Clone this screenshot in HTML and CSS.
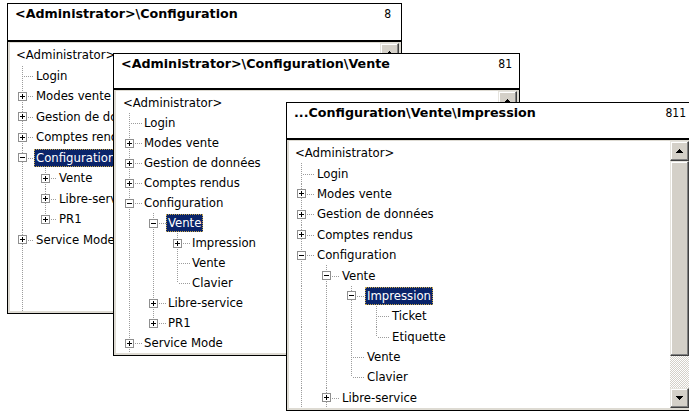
FILE: index.html
```html
<!DOCTYPE html>
<html lang="fr">
<head>
<meta charset="utf-8">
<title>Configuration</title>
<link rel="stylesheet" href="styles.css">
</head>
<body>
<div class="desk">

  <div class="win w1">
    <div class="title"><span class="path">&lt;Administrator&gt;\Configuration</span><span class="num">8</span></div>
    <div class="tree">
      <div class="nodes">
        <div class="row"><span class="lbl root">&lt;Administrator&gt;</span></div>
        <div class="row"><i class="c t"></i><span class="lbl">Login</span></div>
        <div class="row"><i class="c t"><b class="x p"></b></i><span class="lbl">Modes vente</span></div>
        <div class="row"><i class="c t"><b class="x p"></b></i><span class="lbl">Gestion de données</span></div>
        <div class="row"><i class="c t"><b class="x p"></b></i><span class="lbl">Comptes rendus</span></div>
        <div class="row"><i class="c t"><b class="x"></b></i><span class="lbl sel">Configuration</span></div>
        <div class="row"><i class="c v"></i><i class="c t"><b class="x p"></b></i><span class="lbl">Vente</span></div>
        <div class="row"><i class="c v"></i><i class="c t"><b class="x p"></b></i><span class="lbl">Libre-service</span></div>
        <div class="row"><i class="c v"></i><i class="c l"><b class="x p"></b></i><span class="lbl">PR1</span></div>
        <div class="row"><i class="c t"><b class="x p"></b></i><span class="lbl">Service Mode</span></div>
        <div class="tail"><i class="c v"></i></div>
      </div>
      <div class="vs">
        <div class="sb"><svg width="7" height="4" viewBox="0 0 7 4"><path d="M3 0h1v1h1v1h1v1h1v1H0V3h1V2h1V1h1z"/></svg></div>
        <div class="thumb"></div>
        <div class="trk"></div>
        <div class="sb"><svg width="7" height="4" viewBox="0 0 7 4"><path d="M0 0h7v1H6v1H5v1H4v1H3V3H2V2H1V1H0z"/></svg></div>
      </div>
    </div>
  </div>

  <div class="win w2">
    <div class="title"><span class="path">&lt;Administrator&gt;\Configuration\Vente</span><span class="num">81</span></div>
    <div class="tree">
      <div class="nodes">
        <div class="row"><span class="lbl root">&lt;Administrator&gt;</span></div>
        <div class="row"><i class="c t"></i><span class="lbl">Login</span></div>
        <div class="row"><i class="c t"><b class="x p"></b></i><span class="lbl">Modes vente</span></div>
        <div class="row"><i class="c t"><b class="x p"></b></i><span class="lbl">Gestion de données</span></div>
        <div class="row"><i class="c t"><b class="x p"></b></i><span class="lbl">Comptes rendus</span></div>
        <div class="row"><i class="c t"><b class="x"></b></i><span class="lbl">Configuration</span></div>
        <div class="row"><i class="c v"></i><i class="c t"><b class="x"></b></i><span class="lbl sel">Vente</span></div>
        <div class="row"><i class="c v"></i><i class="c v"></i><i class="c t"><b class="x p"></b></i><span class="lbl">Impression</span></div>
        <div class="row"><i class="c v"></i><i class="c v"></i><i class="c t"></i><span class="lbl">Vente</span></div>
        <div class="row"><i class="c v"></i><i class="c v"></i><i class="c l"></i><span class="lbl">Clavier</span></div>
        <div class="row"><i class="c v"></i><i class="c t"><b class="x p"></b></i><span class="lbl">Libre-service</span></div>
        <div class="row"><i class="c v"></i><i class="c l"><b class="x p"></b></i><span class="lbl">PR1</span></div>
        <div class="row"><i class="c t"><b class="x p"></b></i><span class="lbl">Service Mode</span></div>
        <div class="tail"><i class="c v"></i></div>
      </div>
      <div class="vs">
        <div class="sb"><svg width="7" height="4" viewBox="0 0 7 4"><path d="M3 0h1v1h1v1h1v1h1v1H0V3h1V2h1V1h1z"/></svg></div>
        <div class="thumb"></div>
        <div class="trk"></div>
        <div class="sb"><svg width="7" height="4" viewBox="0 0 7 4"><path d="M0 0h7v1H6v1H5v1H4v1H3V3H2V2H1V1H0z"/></svg></div>
      </div>
    </div>
  </div>

  <div class="win w3">
    <div class="title"><span class="path">...Configuration\Vente\Impression</span><span class="num">811</span></div>
    <div class="tree">
      <div class="nodes">
        <div class="row"><span class="lbl root">&lt;Administrator&gt;</span></div>
        <div class="row"><i class="c t"></i><span class="lbl">Login</span></div>
        <div class="row"><i class="c t"><b class="x p"></b></i><span class="lbl">Modes vente</span></div>
        <div class="row"><i class="c t"><b class="x p"></b></i><span class="lbl">Gestion de données</span></div>
        <div class="row"><i class="c t"><b class="x p"></b></i><span class="lbl">Comptes rendus</span></div>
        <div class="row"><i class="c t"><b class="x"></b></i><span class="lbl">Configuration</span></div>
        <div class="row"><i class="c v"></i><i class="c t"><b class="x"></b></i><span class="lbl">Vente</span></div>
        <div class="row"><i class="c v"></i><i class="c v"></i><i class="c t"><b class="x"></b></i><span class="lbl sel">Impression</span></div>
        <div class="row"><i class="c v"></i><i class="c v"></i><i class="c v"></i><i class="c t"></i><span class="lbl">Ticket</span></div>
        <div class="row"><i class="c v"></i><i class="c v"></i><i class="c v"></i><i class="c l"></i><span class="lbl">Etiquette</span></div>
        <div class="row"><i class="c v"></i><i class="c v"></i><i class="c t"></i><span class="lbl">Vente</span></div>
        <div class="row"><i class="c v"></i><i class="c v"></i><i class="c l"></i><span class="lbl">Clavier</span></div>
        <div class="row"><i class="c v"></i><i class="c t"><b class="x p"></b></i><span class="lbl">Libre-service</span></div>
        <div class="tail"><i class="c v"></i><i class="c v"></i></div>
      </div>
      <div class="vs">
        <div class="sb"><svg width="7" height="4" viewBox="0 0 7 4"><path d="M3 0h1v1h1v1h1v1h1v1H0V3h1V2h1V1h1z"/></svg></div>
        <div class="thumb"></div>
        <div class="trk"></div>
        <div class="sb"><svg width="7" height="4" viewBox="0 0 7 4"><path d="M0 0h7v1H6v1H5v1H4v1H3V3H2V2H1V1H0z"/></svg></div>
      </div>
    </div>
  </div>

</div>
</body>
</html>
```

FILE: styles.css
```css
* { box-sizing: border-box; }
html, body { margin: 0; padding: 0; }
body {
  width: 689px;
  height: 412px;
  overflow: hidden;
  background: #fff;
  color: #000;
  font-family: "DejaVu Sans Condensed", "DejaVu Sans", sans-serif;
  font-stretch: condensed;
  font-size: 13px;
}
.desk { position: relative; width: 689px; height: 412px; overflow: hidden; }

.win {
  position: absolute;
  display: flex;
  flex-direction: column;
  background: #fff;
  border: 1px solid #000;
}
.w1 { left: 7px; top: 3px; width: 395px; height: 311px; --ind: 23px; --rh: 20.5px; --pl: 1px; --th: 36px; --np: 10px; }
.w2 { left: 113px; top: 53px; width: 407px; height: 303px; --ind: 24px; --rh: 20px; --pl: 2px; --th: 34px; --np: 7px; }
.w3 { left: 286px; top: 102px; width: 406px; height: 309px; --ind: 25px; --rh: 20.4px; --pl: 1px; --th: 35px; --np: 5px; }

.title {
  flex: none;
  height: calc(var(--th) + 2px);
  border-bottom: 2px solid #000;
  display: flex;
  justify-content: space-between;
  align-items: flex-start;
  padding: 2px var(--np) 0 7px;
  line-height: 16px;
}
.path {
  font-family: "DejaVu Sans", sans-serif;
  font-stretch: normal;
  font-weight: bold;
  font-size: 12.7px;
}
.num { font-size: 12px; }

.tree {
  flex: 1;
  min-height: 0;
  display: flex;
  border-style: solid;
  border-width: 1px 2px 2px 2px;
  border-color: #dedbd3;
}
.nodes {
  flex: 1;
  min-width: 0;
  overflow: hidden;
  padding: 2px 0 0 var(--pl);
}
.row {
  display: flex;
  align-items: center;
  height: var(--rh);
  white-space: nowrap;
}
.tail { display: flex; height: 400px; }

.c { flex: none; display: block; width: var(--ind); height: 100%; position: relative; }
.v::before, .t::before, .l::before {
  content: "";
  position: absolute;
  left: 11px;
  top: 0;
  width: 1px;
  height: 100%;
  background: repeating-linear-gradient(to bottom, #9c9c9c 0 1px, transparent 1px 2px);
}
.l::before { height: 50%; }
.t::after, .l::after {
  content: "";
  position: absolute;
  left: 12px;
  right: 0;
  top: 50%;
  height: 1px;
  background: repeating-linear-gradient(to right, transparent 0 1px, #9c9c9c 1px 2px);
}

.x {
  position: absolute;
  z-index: 1;
  left: 7px;
  top: calc(50% - 4.5px);
  width: 9px;
  height: 9px;
  border: 1px solid #8f8f8f;
  background: #fff;
}
.x::before {
  content: "";
  position: absolute;
  left: 1px;
  top: 3px;
  width: 5px;
  height: 1px;
  background: #000;
}
.x.p::after {
  content: "";
  position: absolute;
  left: 3px;
  top: 1px;
  width: 1px;
  height: 5px;
  background: #000;
}

.lbl {
  display: block;
  height: 18px;
  line-height: 16px;
  padding: 0 1px;
  border: 1px solid transparent;
}
.root { margin-left: 3px; }
.sel {
  background: #0a246a;
  color: #fff;
  border: 1px dotted #c9a84a;
}

.vs {
  flex: none;
  width: 19px;
  display: flex;
  flex-direction: column;
}
.sb, .thumb {
  flex: none;
  background: #d4d0c8;
  border: 1px solid;
  border-color: #e6e4de #404040 #404040 #e6e4de;
  box-shadow: inset -1px -1px #808080, inset 1px 1px #fff;
}
.sb {
  height: 20px;
  display: flex;
  align-items: center;
  justify-content: center;
}
.sb svg { display: block; fill: #000; shape-rendering: crispEdges; }
.thumb { height: 195px; }
.trk {
  flex: 1;
  background-color: #fff;
  background-image: conic-gradient(#d4d0c8 25%, #fff 0 50%, #d4d0c8 0 75%, #fff 0);
  background-size: 2px 2px;
}
```
